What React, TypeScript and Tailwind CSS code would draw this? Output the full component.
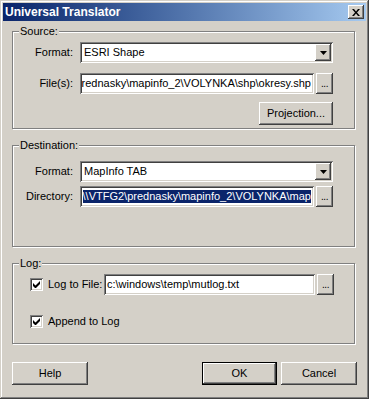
const raised =
  "shadow-[inset_-1px_-1px_0_#404040,inset_1px_1px_0_#ffffff,inset_-2px_-2px_0_#808080,inset_2px_2px_0_#d4d0c8]";
const sunken =
  "shadow-[inset_1px_1px_0_#808080,inset_-1px_-1px_0_#ffffff,inset_2px_2px_0_#404040,inset_-2px_-2px_0_#d4d0c8]";

function Button({ label, w, h = 23, isDefault = false }: { label: string; w: number; h?: number; isDefault?: boolean }) {
  return (
    <div
      className={`flex shrink-0 items-center justify-center bg-[#d4d0c8] ${
        isDefault
          ? "shadow-[inset_0_0_0_1px_#000000,inset_-2px_-2px_0_#404040,inset_2px_2px_0_#ffffff,inset_-3px_-3px_0_#808080]"
          : raised
      }`}
      style={{ width: w, height: h }}
    >
      {label}
    </div>
  );
}

function Browse() {
  return (
    <div className={`flex h-[21px] w-[17px] shrink-0 items-end justify-center bg-[#d4d0c8] pb-[5px] ${raised}`}>
      <span className="text-[10px] leading-none tracking-[-0.5px]">...</span>
    </div>
  );
}

function Combo({ value }: { value: string }) {
  return (
    <div className={`flex h-[21px] w-[253px] items-center bg-white p-[2px] ${sunken}`}>
      <span className="flex-1 pl-[2px]">{value}</span>
      <div className={`flex h-[17px] w-[16px] items-center justify-center bg-[#d4d0c8] ${raised}`}>
        <svg width="7" height="4" viewBox="0 0 7 4">
          <path d="M0 0h7L3.5 4z" fill="#000" />
        </svg>
      </div>
    </div>
  );
}

function Field({
  value,
  w,
  selected = false,
  alignEnd = true,
}: {
  value: string;
  w: number;
  selected?: boolean;
  alignEnd?: boolean;
}) {
  return (
    <div
      className={`flex h-[21px] items-center overflow-hidden bg-white px-[3px] ${alignEnd ? "justify-end" : "justify-start"} ${sunken}`}
      style={{ width: w }}
    >
      <span className={`whitespace-nowrap ${selected ? "bg-[#0a246a] text-white" : ""}`}>{value}</span>
    </div>
  );
}

function Check({ label }: { label: string }) {
  return (
    <div className="flex items-center gap-[5px]">
      <div className={`flex h-[13px] w-[13px] items-center justify-center bg-white ${sunken}`}>
        <svg width="7" height="7" viewBox="0 0 7 7">
          <path d="M0 2v3l2 2h1l4-4V0L2.5 4.5z" fill="#000" />
        </svg>
      </div>
      <span>{label}</span>
    </div>
  );
}

function Group({ title, className, children }: { title: string; className: string; children: React.ReactNode }) {
  return (
    <div
      className={`relative w-[343px] border border-[#808080] shadow-[inset_1px_1px_0_#ffffff,1px_1px_0_#ffffff] ${className}`}
    >
      <span className="absolute -top-[7px] left-[6px] bg-[#d4d0c8] px-[1px] leading-[13px]">{title}</span>
      {children}
    </div>
  );
}

function Label({ text }: { text: string }) {
  return <span className="w-[67px] shrink-0 pr-[7px] text-right">{text}</span>;
}

export default function App() {
  return (
    <div className="flex h-[399px] w-[369px] flex-col bg-[#d4d0c8] p-[3px] font-['Liberation_Sans',Arial,sans-serif] text-[11px] leading-[13px] text-black shadow-[inset_-1px_-1px_0_#404040,inset_1px_1px_0_#d4d0c8,inset_-2px_-2px_0_#808080,inset_2px_2px_0_#ffffff]">
      <div className="flex h-[18px] items-center justify-between bg-linear-to-r from-[#0a246a] to-[#a6caf0] pl-[2px] pr-[2px]">
        <span className="text-[12px] font-bold text-white">Universal Translator</span>
        <div className={`flex h-[14px] w-[16px] items-center justify-center bg-[#d4d0c8] ${raised}`}>
          <svg width="8" height="7" viewBox="0 0 8 7">
            <path d="M0 0h2l2 2.5L6 0h2L5 3.5 8 7H6L4 4.5 2 7H0l3-3.5z" fill="#000" />
          </svg>
        </div>
      </div>

      <div className="flex flex-col px-[9px]">
        <Group title="Source:" className="mt-[10px] h-[98px] pt-[10px]">
          <div className="flex items-center">
            <Label text="Format:" />
            <Combo value="ESRI Shape" />
          </div>
          <div className="mt-[10px] flex items-center">
            <Label text="File(s):" />
            <div className="flex gap-[2px]">
              <Field value="rednasky\mapinfo_2\VOLYNKA\shp\okresy.shp" w={234} />
              <Browse />
            </div>
          </div>
          <div className="mt-[8px] flex w-[320px] justify-end">
            <Button label="Projection..." w={74} />
          </div>
        </Group>

        <Group title="Destination:" className="mt-[16px] h-[102px] pt-[15px]">
          <div className="flex items-center">
            <Label text="Format:" />
            <Combo value="MapInfo TAB" />
          </div>
          <div className="mt-[4px] flex items-center">
            <Label text="Directory:" />
            <div className="flex gap-[2px]">
              <Field value="\\VTFG2\prednasky\mapinfo_2\VOLYNKA\map" w={234} selected />
              <Browse />
            </div>
          </div>
        </Group>

        <Group title="Log:" className="mt-[16px] h-[81px] pl-[17px] pt-[10px]">
          <div className="flex items-center">
            <div className="w-[74px]">
              <Check label="Log to File:" />
            </div>
            <div className="flex gap-[2px]">
              <Field value="c:\windows\temp\mutlog.txt" w={211} alignEnd={false} />
              <Browse />
            </div>
          </div>
          <div className="mt-[20px]">
            <Check label="Append to Log" />
          </div>
        </Group>

        <div className="mt-[18px] flex items-center">
          <Button label="Help" w={76} />
          <div className="ml-auto flex gap-[4px]">
            <Button label="OK" w={75} isDefault />
            <Button label="Cancel" w={76} />
          </div>
        </div>
      </div>
    </div>
  );
}
